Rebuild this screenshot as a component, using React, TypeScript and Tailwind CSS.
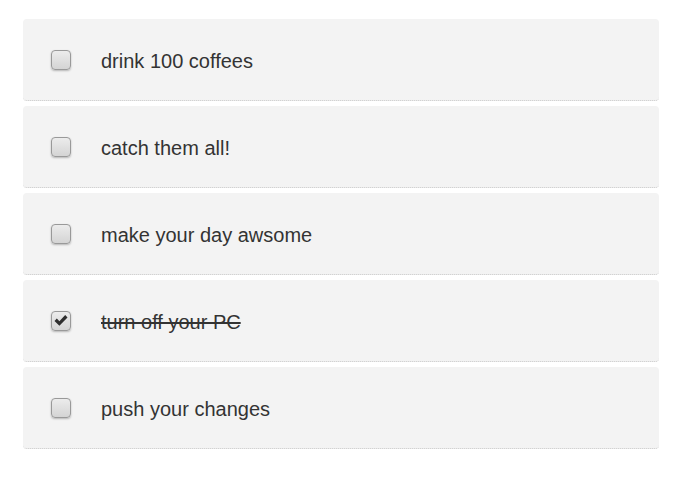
import React, { useState } from "react";

const initial = [
  { text: "drink 100 coffees", done: false },
  { text: "catch them all!", done: false },
  { text: "make your day awsome", done: false },
  { text: "turn off your PC", done: true },
  { text: "push your changes", done: false },
];

export default function App() {
  const [items, setItems] = useState(initial);
  return (
    <div className="min-h-[482px] bg-white pt-[19px] px-[23px]" style={{ fontFamily: '"Liberation Sans", Arial, sans-serif' }}>
      <ul className="flex flex-col gap-[5px] w-[636px]">
        {items.map((it, i) => (
          <li
            key={i}
            className="h-[82px] flex items-center bg-[#f3f3f3] rounded-[4px] border-b border-dotted border-[#c8c8c8] pl-[28px]"
          >
            <button
              onClick={() =>
                setItems(items.map((x, j) => (j === i ? { ...x, done: !x.done } : x)))
              }
              className="w-[20px] h-[20px] rounded-[4px] border border-[#999] bg-gradient-to-b from-[#ececec] to-[#d4d4d4] shadow-[0_1px_2px_rgba(0,0,0,0.25)] flex items-center justify-center"
            >
              {it.done && (
                <svg width="14" height="13" viewBox="0 0 14 13">
                  <path d="M0.5 7 L2.8 4.6 L5.4 7.2 L11.2 1 L13.5 3.4 L5.4 11.8 Z" fill="#2e2e2e" />
                </svg>
              )}
            </button>
            <span
              className={`ml-[30px] mt-[2px] text-[20px] text-[#333] ${it.done ? "line-through" : ""}`}
            >
              {it.text}
            </span>
          </li>
        ))}
      </ul>
    </div>
  );
}
